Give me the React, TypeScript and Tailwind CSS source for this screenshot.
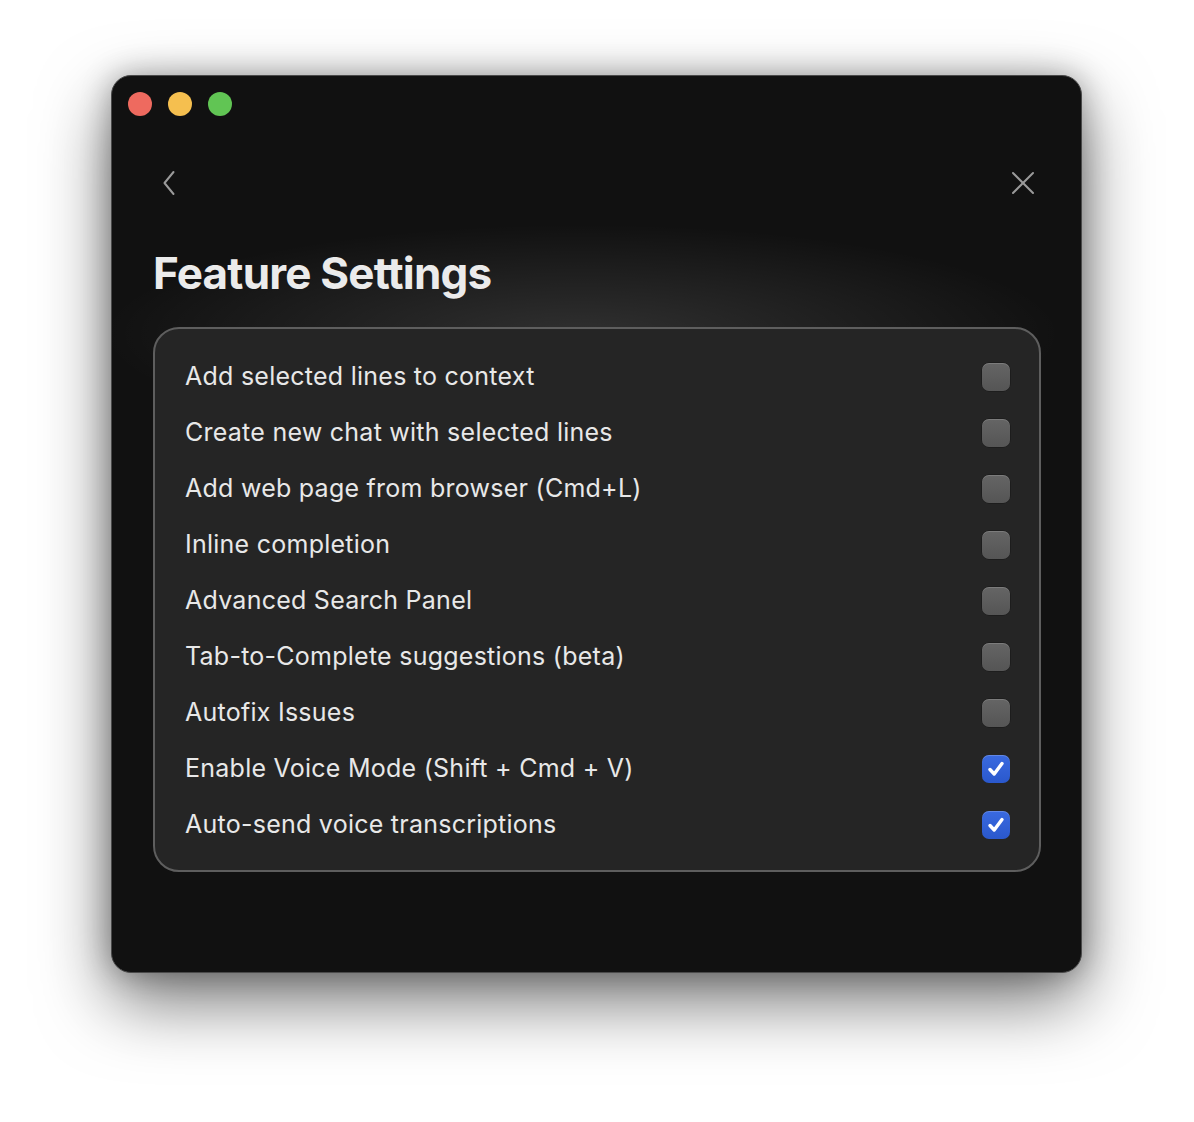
import React from "react";

const items: { label: string; checked: boolean }[] = [
  { label: "Add selected lines to context", checked: false },
  { label: "Create new chat with selected lines", checked: false },
  { label: "Add web page from browser (Cmd+L)", checked: false },
  { label: "Inline completion", checked: false },
  { label: "Advanced Search Panel", checked: false },
  { label: "Tab-to-Complete suggestions (beta)", checked: false },
  { label: "Autofix Issues", checked: false },
  { label: "Enable Voice Mode (Shift + Cmd + V)", checked: true },
  { label: "Auto-send voice transcriptions", checked: true },
];

function Checkbox({ checked }: { checked: boolean }) {
  if (checked) {
    return (
      <div className="w-[28px] h-[28px] rounded-[7px] bg-gradient-to-b from-[#3a6ae0] to-[#2a58cc] flex items-center justify-center shadow-[inset_0_1px_0_rgba(255,255,255,0.2)]">
        <svg width="20" height="20" viewBox="0 0 20 20" fill="none">
          <path d="M4 10.5 L8.2 15 L16 4.5" stroke="white" strokeWidth="3.4" strokeLinecap="round" strokeLinejoin="round" />
        </svg>
      </div>
    );
  }
  return (
    <div className="w-[28px] h-[28px] rounded-[7px] bg-gradient-to-b from-[#656565] to-[#555555] shadow-[inset_0_1px_0_rgba(255,255,255,0.15),0_0_0_0.5px_rgba(0,0,0,0.4)]" />
  );
}

export default function App() {
  return (
    <div className="min-h-[1122px] w-[1194px] bg-white pt-[75px] pl-[111px]" style={{ fontFamily: "Inter, 'Noto Sans', sans-serif" }}>
      <div className="relative w-[971px] h-[898px] rounded-[20px] bg-[#111111] border border-[#4a4a4a] shadow-[0_28px_70px_rgba(0,0,0,0.55),0_0_30px_rgba(0,0,0,0.3)] overflow-hidden">
        <div
          className="absolute inset-0 pointer-events-none"
          style={{ background: "radial-gradient(ellipse 480px 110px at 470px 258px, rgba(255,255,255,0.13), rgba(255,255,255,0) 100%)" }}
        />
        <div className="relative flex flex-col">
          <div className="flex items-center gap-[16px] pl-[16px] pt-[16px]">
            <div className="w-[24px] h-[24px] rounded-full bg-[#ee6a5f]" />
            <div className="w-[24px] h-[24px] rounded-full bg-[#f5bf4f]" />
            <div className="w-[24px] h-[24px] rounded-full bg-[#61c554]" />
          </div>
          <div className="flex items-center justify-between pl-[49px] pr-[46px] mt-[52px] h-[30px]">
            <svg width="16" height="26" viewBox="0 0 16 26" fill="none">
              <path d="M12.5 2 L3.5 13 L12.5 24" stroke="#9a9a9a" strokeWidth="2" strokeLinecap="round" strokeLinejoin="round" />
            </svg>
            <svg width="24" height="24" viewBox="0 0 24 24" fill="none">
              <path d="M2 2 L22 22 M22 2 L2 22" stroke="#9a9a9a" strokeWidth="2" strokeLinecap="round" />
            </svg>
          </div>
          <h1 className="pl-[41px] mt-[49px] text-[44px] leading-[52px] font-bold tracking-[-0.8px] text-[#ebebeb]">Feature Settings</h1>
          <div className="ml-[41px] mt-[28px] w-[888px] rounded-[26px] border-2 border-[#5e5e5e] bg-[#252525] pt-[20px] pb-[17px]">
            {items.map((it) => (
              <div key={it.label} className="flex items-center justify-between h-[56px] pl-[30px] pr-[29px]">
                <span className="text-[25px] text-[#e8e8e8] tracking-[0.25px]">{it.label}</span>
                <Checkbox checked={it.checked} />
              </div>
            ))}
          </div>
        </div>
      </div>
    </div>
  );
}
